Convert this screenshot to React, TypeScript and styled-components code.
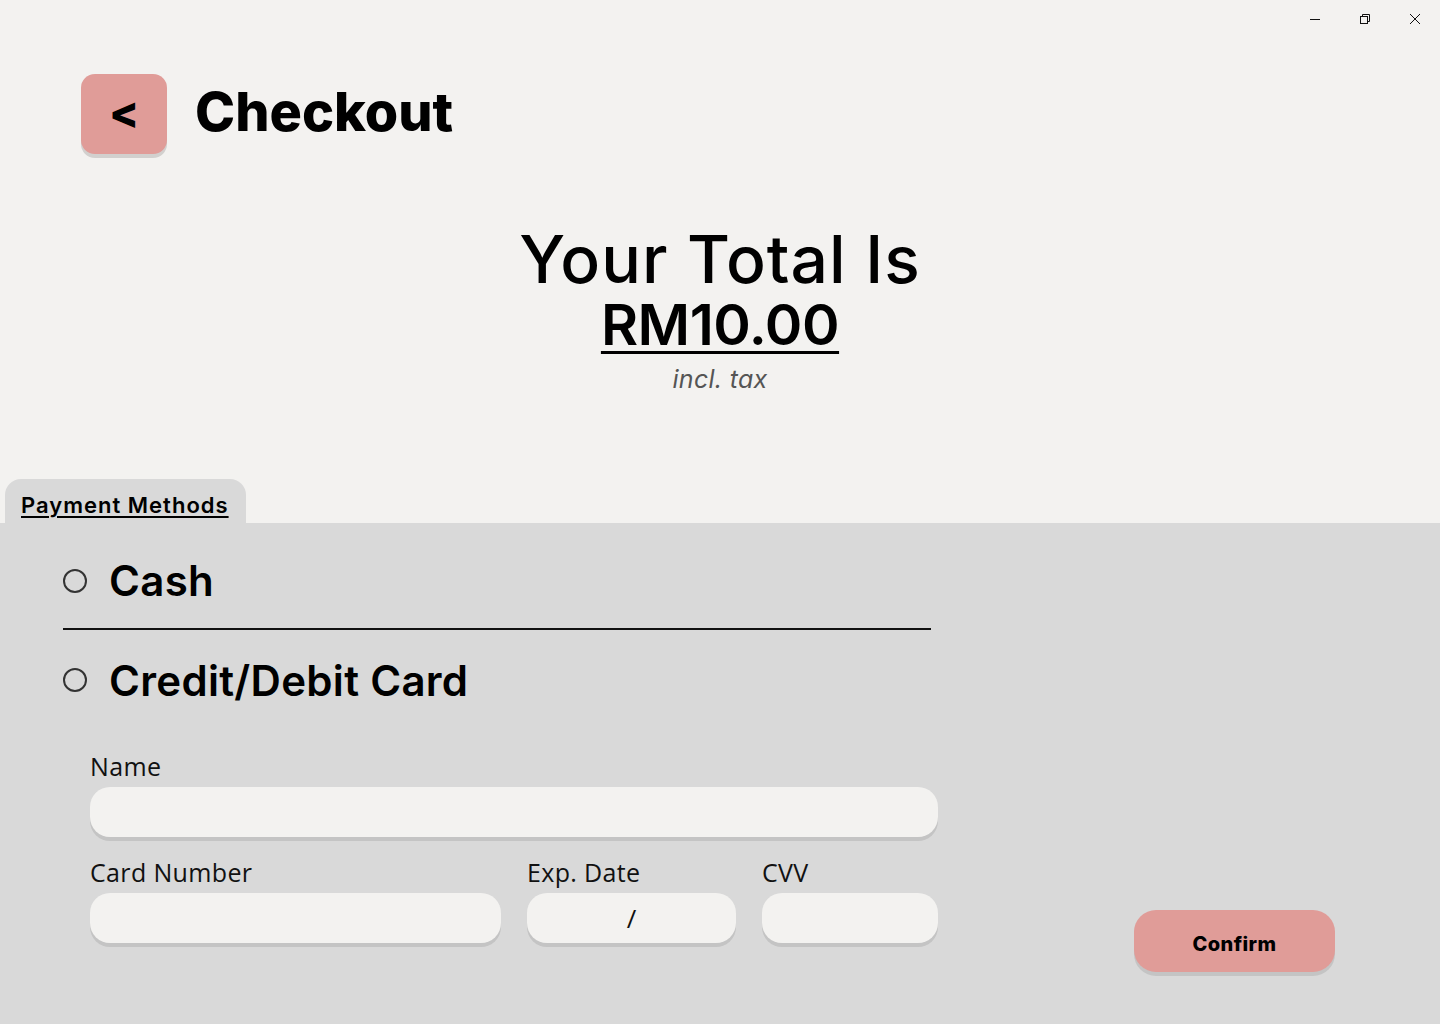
import styled, { createGlobalStyle } from 'styled-components';

const GlobalStyle = createGlobalStyle`
  html, body {
    margin: 0;
    padding: 0;
    background: #f3f2f0;
  }
  * {
    box-sizing: border-box;
  }
`;

const HEAD = '"Inter", "Noto Sans", sans-serif';
const BODY = '"Open Sans", "Noto Sans", sans-serif';

export default function App() {
  return (
    <>
      <GlobalStyle />
      <Page>
        <TitleBar>
          <WinButton aria-label="minimize">
            <svg width="10" height="10" viewBox="0 0 10 10">
              <line x1="0" y1="5.5" x2="10" y2="5.5" stroke="#111" strokeWidth="1" />
            </svg>
          </WinButton>
          <WinButton aria-label="restore">
            <svg width="10" height="10" viewBox="0 0 10 10" fill="none" stroke="#111" strokeWidth="1">
              <rect x="0.5" y="2.5" width="7" height="7" />
              <path d="M2.5 2.5V0.5h7v7h-2" />
            </svg>
          </WinButton>
          <WinButton aria-label="close">
            <svg width="10" height="10" viewBox="0 0 10 10" stroke="#111" strokeWidth="1">
              <line x1="0" y1="0" x2="10" y2="10" />
              <line x1="10" y1="0" x2="0" y2="10" />
            </svg>
          </WinButton>
        </TitleBar>

        <Header>
          <BackButton>&lt;</BackButton>
          <Title>Checkout</Title>
        </Header>

        <TotalSection>
          <TotalLabel>Your Total Is</TotalLabel>
          <Amount>RM10.00</Amount>
          <TaxNote>incl. tax</TaxNote>
        </TotalSection>

        <PaymentArea>
          <Tab>
            <TabText>Payment Methods</TabText>
          </Tab>
          <Panel>
            <Methods>
              <Option $height={105} $top={10}>
                <Radio />
                <OptionText>Cash</OptionText>
              </Option>
              <Divider />
              <Option $height={100} $top={0}>
                <Radio />
                <OptionText>Credit/Debit Card</OptionText>
              </Option>
              <CardForm>
                <Field>
                  <Label>Name</Label>
                  <Input />
                </Field>
                <FieldRow>
                  <Field $width={411}>
                    <Label>Card Number</Label>
                    <Input />
                  </Field>
                  <Field $width={209}>
                    <Label>Exp. Date</Label>
                    <Input>
                      <Slash>/</Slash>
                    </Input>
                  </Field>
                  <Field $width={176}>
                    <Label>CVV</Label>
                    <Input />
                  </Field>
                </FieldRow>
              </CardForm>
            </Methods>
            <ConfirmButton>Confirm</ConfirmButton>
          </Panel>
        </PaymentArea>
      </Page>
    </>
  );
}

const Page = styled.div`
  min-height: 1024px;
  display: flex;
  flex-direction: column;
  background: #f3f2f0;
  color: #000;
`;

const TitleBar = styled.div`
  height: 38px;
  display: flex;
  justify-content: flex-end;
`;

const WinButton = styled.div`
  width: 50px;
  height: 38px;
  display: flex;
  align-items: center;
  justify-content: center;
`;

const Header = styled.div`
  display: flex;
  align-items: center;
  gap: 28px;
  margin-top: 36px;
  padding-left: 81px;
`;

const BackButton = styled.div`
  width: 86px;
  height: 80px;
  border-radius: 14px;
  background: #e09c98;
  box-shadow: 0 4px 0 #d2d0ce;
  display: flex;
  align-items: center;
  justify-content: center;
  font-family: ${HEAD};
  font-weight: 800;
  font-size: 44px;
  padding-bottom: 4px;
`;

const Title = styled.h1`
  margin: 0;
  font-family: ${HEAD};
  font-weight: 800;
  font-size: 54px;
  letter-spacing: 0;
  line-height: 1;
  padding-bottom: 4px;
`;

const TotalSection = styled.div`
  display: flex;
  flex-direction: column;
  align-items: center;
  margin-top: 70px;
`;

const TotalLabel = styled.div`
  font-family: ${HEAD};
  font-weight: 500;
  font-size: 66px;
  line-height: 70px;
  letter-spacing: 1px;
`;

const Amount = styled.div`
  font-family: ${HEAD};
  font-weight: 600;
  font-size: 57px;
  line-height: 62px;
  letter-spacing: -0.5px;
  text-decoration: underline;
  text-decoration-thickness: 3px;
  text-underline-offset: 6px;
`;

const TaxNote = styled.div`
  margin-top: 8px;
  font-family: ${HEAD};
  font-style: italic;
  font-size: 25px;
  letter-spacing: 0.3px;
  color: #555;
`;

const PaymentArea = styled.div`
  flex: 1;
  display: flex;
  flex-direction: column;
  margin-top: 85px;
`;

const Tab = styled.div`
  align-self: flex-start;
  margin-left: 5px;
  width: 241px;
  height: 44px;
  border-radius: 16px 16px 0 0;
  background: #d9d9d9;
  display: flex;
  align-items: flex-end;
  padding: 0 0 5px 16px;
`;

const TabText = styled.span`
  font-family: ${HEAD};
  font-weight: 600;
  font-size: 22px;
  letter-spacing: 1px;
  text-decoration: underline;
  text-decoration-thickness: 1.5px;
  text-underline-offset: 3px;
`;

const Panel = styled.div`
  flex: 1;
  background: #d9d9d9;
  display: flex;
  justify-content: space-between;
  padding: 0 105px 52px 63px;
`;

const Methods = styled.div`
  width: 875px;
  display: flex;
  flex-direction: column;
`;

const Option = styled.div<{ $height: number; $top: number }>`
  height: ${(p) => p.$height}px;
  padding-top: ${(p) => p.$top}px;
  display: flex;
  align-items: center;
  gap: 22px;
`;

const Radio = styled.span`
  width: 24px;
  height: 24px;
  border-radius: 50%;
  border: 2px solid #333;
  flex-shrink: 0;
`;

const OptionText = styled.span`
  font-family: ${HEAD};
  font-weight: 600;
  font-size: 42px;
  letter-spacing: 0.3px;
`;

const Divider = styled.div`
  width: 868px;
  height: 2px;
  background: #111;
`;

const CardForm = styled.div`
  display: flex;
  flex-direction: column;
  gap: 20px;
  padding-left: 27px;
  margin-top: 21px;
`;

const FieldRow = styled.div`
  display: flex;
  gap: 26px;
`;

const Field = styled.div<{ $width?: number }>`
  width: ${(p) => (p.$width ? `${p.$width}px` : '100%')};
  display: flex;
  flex-direction: column;
  gap: 6px;
`;

const Label = styled.label`
  font-family: ${BODY};
  font-size: 25px;
  line-height: 30px;
  letter-spacing: 0.35px;
  color: #111;
`;

const Input = styled.div`
  height: 50px;
  border-radius: 20px;
  background: #f3f2f0;
  box-shadow: 0 4px 0 #c4c4c4;
  display: flex;
  align-items: center;
  justify-content: center;
`;

const Slash = styled.span`
  font-family: ${BODY};
  font-size: 26px;
  color: #111;
`;

const ConfirmButton = styled.button`
  align-self: flex-end;
  width: 201px;
  height: 62px;
  border: none;
  border-radius: 22px;
  background: #e09c98;
  box-shadow: 0 4px 0 #c4c4c4;
  font-family: ${HEAD};
  font-weight: 800;
  font-size: 20px;
  letter-spacing: 0.4px;
  color: #000;
  padding: 6px 0 0;
`;
